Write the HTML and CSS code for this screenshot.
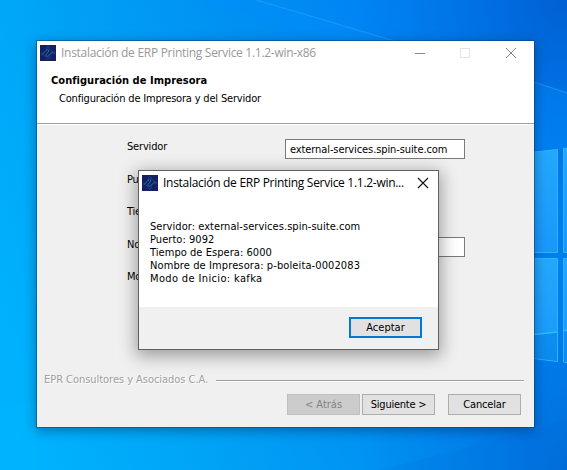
FILE: index.html
```html
<!DOCTYPE html>
<html lang="es">
<head>
<meta charset="utf-8">
<title>Instalación de ERP Printing Service</title>
<link rel="stylesheet" href="styles.css">
</head>
<body>
<svg class="wallpaper" viewBox="0 0 567 470" preserveAspectRatio="none" aria-hidden="true">
  <defs>
    <linearGradient id="sky" x1="0" y1="0.65" x2="1" y2="0.35">
      <stop offset="0" stop-color="#00b1fd"/>
      <stop offset="0.25" stop-color="#00a3f6"/>
      <stop offset="0.55" stop-color="#0090f2"/>
      <stop offset="0.8" stop-color="#0083f4"/>
      <stop offset="1" stop-color="#007cee"/>
    </linearGradient>
    <radialGradient id="corner" gradientUnits="userSpaceOnUse" cx="567" cy="0" r="220">
      <stop offset="0" stop-color="#0058cc" stop-opacity="0.8"/>
      <stop offset="1" stop-color="#0070e0" stop-opacity="0"/>
    </radialGradient>
    <radialGradient id="low" gradientUnits="userSpaceOnUse" cx="590" cy="480" r="230">
      <stop offset="0" stop-color="#0064d0" stop-opacity="0.8"/>
      <stop offset="1" stop-color="#0078e0" stop-opacity="0"/>
    </radialGradient>
    <linearGradient id="pane" x1="0" y1="0" x2="0" y2="1">
      <stop offset="0" stop-color="#22a8fb"/>
      <stop offset="1" stop-color="#1997fb"/>
    </linearGradient>
  </defs>
  <rect width="567" height="470" fill="url(#sky)"/>
  <rect width="567" height="470" fill="url(#corner)"/>
  <rect width="567" height="470" fill="url(#low)"/>
  <path d="M256 0L398 42L534 82L567 93V150H534V100L200 0Z" fill="#0090ff" opacity="0.3"/>
  <path d="M256 0L398 42M534 82L567 93" stroke="#32a5ff" stroke-width="1.3" opacity="0.5"/>
  <path d="M534 430L567 419V470H380Z" fill="#005fd0" opacity="0.12"/>
  <path d="M0 408L37 402V470H0Z" fill="#00b9ff" opacity="0.3"/>
  <g fill="url(#pane)" stroke="#31b4fc" stroke-width="1">
    <path d="M530 152.500L557.500 149.500V252.500H530Z"/>
    <path d="M563.500 148.500L570 148V252.500H563.500Z"/>
    <path d="M530 258.500H557.500V361.500L530 358Z"/>
    <path d="M563.500 258.500H570V363L563.500 362Z"/>
  </g>
  <path d="M530 335L557 332V361L530 358ZM564 331H567V362H564Z" fill="#0080e4" opacity="0.5"/>
  <path d="M530 335L557 332M564 331L567 330" stroke="#25c0ff" stroke-width="1.500"/>
</svg>

<svg class="defs" width="0" height="0" aria-hidden="true">
  <symbol id="app-icon" viewBox="0 0 16 16">
    <rect width="16" height="16" fill="#142062"/>
    <g fill="none" stroke="#1f7cb3" stroke-width=".9" stroke-linecap="round" stroke-linejoin="round">
      <path d="M2.800 9L6 5.300Q7.600 3.700 8.600 5.100Q9.100 6 8.100 7L6.200 9.300Q5.500 10.500 6.600 11.200Q7.800 11.700 8.800 10.500L13 6.800"/>
      <path d="M6.500 4L6.700 2.500L8 1.700L9.400 2.500L9.500 4L12.500 6.500M3.500 9.500L6 12L6.500 13.700L8 14.300L9.300 13.500L9.500 11.500" stroke="#1c5590" stroke-width=".6"/>
      <circle cx="1.900" cy="9.200" r=".8" stroke="#1c5590" stroke-width=".6"/>
      <circle cx="13.900" cy="8" r=".8" stroke="#1c5590" stroke-width=".6"/>
    </g>
  </symbol>
</svg>

<div class="window">
  <div class="titlebar">
    <svg class="app-icon"><use href="#app-icon"/></svg>
    <span class="title">Instalación de ERP Printing Service 1.1.2-win-x86</span>
    <svg class="controls" viewBox="0 0 102 12" fill="none">
      <path d="M0 6.500H10" stroke="#8c8c8c"/>
      <rect x="45.500" y="1.500" width="9" height="9" stroke="#e4e4e4"/>
      <path d="M91 1L101 11M101 1L91 11" stroke="#858585"/>
    </svg>
  </div>
  <div class="header">
    <h1>Configuración de Impresora</h1>
    <p>Configuración de Impresora y del Servidor</p>
  </div>
  <div class="form">
    <label>Servidor</label><div class="field"><span>external-services.spin-suite.com</span></div>
    <label>Pu</label><i></i>
    <label>Tie</label><i></i>
    <label>No</label><div class="field"></div>
    <label>Mo</label><i></i>
  </div>
  <div class="branding"><span>EPR Consultores y Asociados C.A.</span><hr></div>
  <div class="actions">
    <button class="off" disabled>&lt; Atrás</button>
    <button class="next">Siguiente &gt;</button>
    <button class="cancel">Cancelar</button>
  </div>
</div>

<div class="dialog">
  <div class="titlebar">
    <svg class="app-icon"><use href="#app-icon"/></svg>
    <span class="title">Instalación de ERP Printing Service 1.1.2-win...</span>
    <svg class="close" viewBox="0 0 12 12"><path d="M1 1L11 11M11 1L1 11" stroke="#111" stroke-width="1.100"/></svg>
  </div>
  <div class="message">
    <div>Servidor: external-services.spin-suite.com</div>
    <div>Puerto: 9092</div>
    <div>Tiempo de Espera: 6000</div>
    <div class="printer">Nombre de Impresora: p-boleita-0002083</div>
    <div class="mode">Modo de Inicio: kafka</div>
  </div>
  <div class="dialog-footer"><button class="primary">Aceptar</button></div>
</div>
</body>
</html>
```

FILE: styles.css
```css
* { box-sizing: border-box; }

body {
  margin: 0;
  width: 567px;
  height: 470px;
  padding: 41px 0 0 37px;
  overflow: hidden;
  position: relative;
  background: #0094f3;
  color: #000;
  font: 11px/13px "DejaVu Sans Condensed", "DejaVu Sans", sans-serif;
  font-stretch: condensed;
  white-space: nowrap;
}

.wallpaper { position: absolute; inset: 0; width: 567px; height: 470px; }
.defs { position: absolute; }

.window {
  position: relative;
  width: 497px;
  height: 386px;
  background: #f0f0f0;
  display: flex;
  flex-direction: column;
  box-shadow: 0 0 0 1px rgba(0, 65, 110, .5), 0 3px 11px 1px rgba(0, 20, 60, .38);
}

.titlebar {
  display: flex;
  align-items: center;
  height: 24px;
  background: #fff;
  padding-left: 3px;
}
.app-icon { width: 16px; height: 16px; flex: none; }
.title {
  font: 12px/16px "Open Sans", "Noto Sans", sans-serif;
  font-stretch: normal;
  letter-spacing: -.29px;
  margin-left: 5px;
}
.window .title { color: #999; }
.controls { width: 102px; height: 12px; margin-left: auto; margin-right: 17px; }

.header {
  height: 60px;
  background: #fff;
  border-bottom: 1px solid #fff;
  box-shadow: inset 0 -1px #a0a0a0;
  padding: 9px 14px 0;
}
h1 { margin: 0; font-size: 11px; line-height: 14px; font-weight: bold; letter-spacing: .04px; }
.header p { margin: 4px 0 0 8px; letter-spacing: -.18px; }

.form {
  display: grid;
  grid-template-columns: 158px 180px;
  grid-template-rows: 33px 32px 33px 32px 33px;
  margin: 14px 0 0 90px;
}
.form label { padding-top: 1px; letter-spacing: -.17px; }
.field {
  height: 20px;
  border: 1px solid #7a7a7a;
  background: #fff;
  padding: 3px 4px;
  letter-spacing: -.1px;
}

.branding {
  display: flex;
  align-items: center;
  gap: 8px;
  height: 14px;
  margin: 70px 10px 0 7px;
  color: #a0a0a0;
  letter-spacing: -.04px;
  text-shadow: 1px 1px #fff;
}
.branding hr {
  flex: 1;
  height: 2px;
  margin: 3px 0 0;
  border: 0;
  border-top: 1px solid #a0a0a0;
  background: #fff;
}

.actions { display: flex; justify-content: flex-end; gap: 2px; margin: 8px 13px 0 0; }
button {
  display: flex;
  align-items: center;
  justify-content: center;
  width: 73px;
  height: 21px;
  padding: 0;
  border: 1px solid #adadad;
  background: #e1e1e1;
  color: #000;
  font: inherit;
}
button.off { background: #ccc; border-color: #bfbfbf; color: #838383; }
.next { letter-spacing: -.25px; }
.cancel { margin-left: 11px; letter-spacing: -.17px; }

.dialog {
  position: absolute;
  left: 138px;
  top: 170px;
  width: 301px;
  height: 180px;
  border: 1px solid #606060;
  background: #fff;
  box-shadow: 0 4px 16px 2px rgba(0, 0, 0, .35);
}
.dialog .close { width: 12px; height: 12px; margin-left: auto; margin-right: 9px; }
.message { height: 112px; padding: 25px 0 0 11px; letter-spacing: .05px; }
.printer { letter-spacing: .11px; }
.mode { letter-spacing: .36px; }
.dialog-footer {
  height: 42px;
  background: #f0f0f0;
  display: flex;
  justify-content: flex-end;
  padding: 10px 16px 0 0;
}
.primary { border: 2px solid #0078d7; }
```
